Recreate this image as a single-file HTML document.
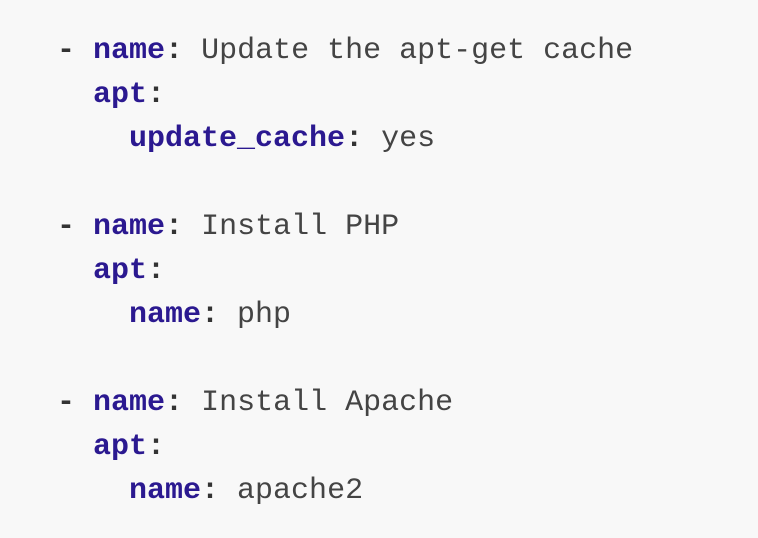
<!DOCTYPE html>
<html><head><style>
html,body{margin:0;padding:0;background:#f8f8f8;width:758px;height:538px;overflow:hidden}
pre{margin:0;position:absolute;left:57px;top:29px;font-family:"Courier New","Liberation Mono",monospace;font-size:30px;line-height:44px;color:#444}
b{color:#2b1990;font-weight:bold}
i{font-style:normal;color:#333;font-weight:bold}
</style></head><body>
<pre><i>-</i> <b>name</b><i>:</i> Update the apt-get cache
  <b>apt</b><i>:</i>
    <b>update_cache</b><i>:</i> yes

<i>-</i> <b>name</b><i>:</i> Install PHP
  <b>apt</b><i>:</i>
    <b>name</b><i>:</i> php

<i>-</i> <b>name</b><i>:</i> Install Apache
  <b>apt</b><i>:</i>
    <b>name</b><i>:</i> apache2</pre>
</body></html>
